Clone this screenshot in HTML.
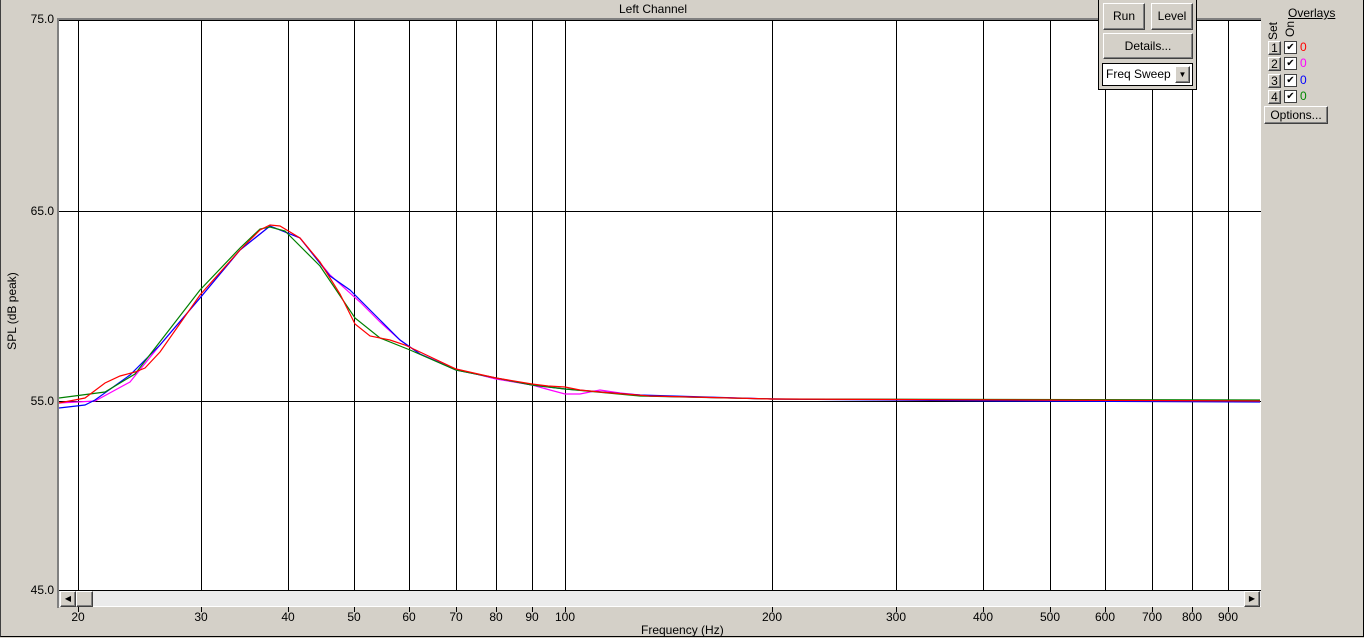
<!DOCTYPE html>
<html><head><meta charset="utf-8"><style>
body{margin:0;width:1364px;height:638px;background:#d4d0c8;font-family:"Liberation Sans",sans-serif;font-size:12px;overflow:hidden;position:relative}
.a{position:absolute}
.btn{position:absolute;background:#d4d0c8;border:1px solid;border-color:#fff #404040 #404040 #fff;box-shadow:inset -1px -1px 0 #808080;text-align:center;color:#000;box-sizing:border-box}
</style></head><body>
<div class="a" style="left:0;top:0;width:1362px;height:636px;border-right:1px solid #000;border-bottom:1px solid #000;border-left:1px solid #404040"></div>
<div class="a" style="left:600px;top:2px;width:106px;text-align:center">Left Channel</div>
<div class="a" style="left:641px;top:623px;">Frequency (Hz)</div>
<div class="a" style="left:-28px;top:304px;width:80px;text-align:center;transform:rotate(-90deg)">SPL (dB peak)</div>
<div class="a" style="left:20px;top:12px;width:34px;text-align:right">75.0</div>
<div class="a" style="left:20px;top:204px;width:34px;text-align:right">65.0</div>
<div class="a" style="left:20px;top:394px;width:34px;text-align:right">55.0</div>
<div class="a" style="left:20px;top:583px;width:34px;text-align:right">45.0</div>
<svg class="a" style="left:0;top:0" width="1364" height="638">
<rect x="57" y="18" width="1204" height="2" fill="#808080"/>
<rect x="57" y="18" width="2" height="590" fill="#808080"/>
<rect x="59" y="20" width="1202" height="571" fill="#fff"/>
<g stroke="#000" stroke-width="1">
<line x1="59" y1="20.5" x2="1261" y2="20.5"/><line x1="59" y1="211.5" x2="1261" y2="211.5"/><line x1="59" y1="401.5" x2="1261" y2="401.5"/><line x1="59" y1="590.5" x2="1261" y2="590.5"/>
<g id="v">
<line x1="78.5" y1="20" x2="78.5" y2="612"/><line x1="201.5" y1="20" x2="201.5" y2="612"/><line x1="288.5" y1="20" x2="288.5" y2="612"/><line x1="354.5" y1="20" x2="354.5" y2="612"/><line x1="409.5" y1="20" x2="409.5" y2="612"/><line x1="456.5" y1="20" x2="456.5" y2="612"/><line x1="496.5" y1="20" x2="496.5" y2="612"/><line x1="532.5" y1="20" x2="532.5" y2="612"/><line x1="565.5" y1="20" x2="565.5" y2="612"/><line x1="772.5" y1="20" x2="772.5" y2="612"/><line x1="896.5" y1="20" x2="896.5" y2="612"/><line x1="983.5" y1="20" x2="983.5" y2="612"/><line x1="1050.5" y1="20" x2="1050.5" y2="612"/><line x1="1105.5" y1="20" x2="1105.5" y2="612"/><line x1="1152.5" y1="20" x2="1152.5" y2="612"/><line x1="1192.5" y1="20" x2="1192.5" y2="612"/><line x1="1228.5" y1="20" x2="1228.5" y2="612"/>
</g></g>
<g fill="none" stroke-width="1.2">
<polyline stroke="#ff00ff" points="59,403 95,401 130,382 160,345 200,298 240,250 270,226 300,238 330,275 360,302 380,322 400,340 420,354 456,369 496,379 532,385 550,390 565,394 580,394 600,390 620,393 650,396 772,399 1260,401"/>
<polyline stroke="#0000ff" points="59,408 85,405 95,400 130,375 160,345 200,298 240,250 270,226 300,238 330,276 350,290 380,320 400,340 420,354 456,370 496,378 532,385 565,389 640,395 772,399 1000,401 1260,402"/>
<polyline stroke="#008000" points="59,398 105,392 135,374 200,290 240,248 260,229 270,227 285,231 320,266 355,318 380,338 410,350 456,370 496,378 532,385 565,389 640,396 772,399 1260,400"/>
<polyline stroke="#ff0000" points="59,403 85,398 105,383 120,376 135,372 145,368 160,352 200,295 240,250 260,230 270,225 280,226 300,238 320,262 340,294 355,324 370,336 390,340 405,345 420,352 456,369 496,378 532,384 548,386 565,387 580,390 600,392 650,396 772,399 1260,401"/>
</g>
<rect x="59" y="591" width="1202" height="16" fill="#ebebeb"/>
<rect x="59" y="606" width="1202" height="1" fill="#fff"/>
</svg>
<div class="btn" style="left:60px;top:591px;width:16px;height:16px;font-size:8px;line-height:14px">◀</div>
<div class="btn" style="left:76px;top:591px;width:17px;height:16px"></div>
<div class="btn" style="left:1244px;top:591px;width:16px;height:16px;font-size:8px;line-height:14px">▶</div>
<div class="a" style="left:52px;top:610px;width:52px;text-align:center">20</div>
<div class="a" style="left:175px;top:610px;width:52px;text-align:center">30</div>
<div class="a" style="left:262px;top:610px;width:52px;text-align:center">40</div>
<div class="a" style="left:328px;top:610px;width:52px;text-align:center">50</div>
<div class="a" style="left:383px;top:610px;width:52px;text-align:center">60</div>
<div class="a" style="left:430px;top:610px;width:52px;text-align:center">70</div>
<div class="a" style="left:470px;top:610px;width:52px;text-align:center">80</div>
<div class="a" style="left:506px;top:610px;width:52px;text-align:center">90</div>
<div class="a" style="left:539px;top:610px;width:52px;text-align:center">100</div>
<div class="a" style="left:746px;top:610px;width:52px;text-align:center">200</div>
<div class="a" style="left:870px;top:610px;width:52px;text-align:center">300</div>
<div class="a" style="left:957px;top:610px;width:52px;text-align:center">400</div>
<div class="a" style="left:1024px;top:610px;width:52px;text-align:center">500</div>
<div class="a" style="left:1079px;top:610px;width:52px;text-align:center">600</div>
<div class="a" style="left:1126px;top:610px;width:52px;text-align:center">700</div>
<div class="a" style="left:1166px;top:610px;width:52px;text-align:center">800</div>
<div class="a" style="left:1202px;top:610px;width:52px;text-align:center">900</div>
<div class="a" style="left:1098px;top:-1px;width:99px;height:91px;background:#d4d0c8;border:1px solid #000;box-sizing:border-box"></div>
<div class="btn" style="left:1103px;top:3px;width:42px;height:27px;line-height:25px">Run</div>
<div class="btn" style="left:1151px;top:3px;width:42px;height:27px;line-height:25px">Level</div>
<div class="btn" style="left:1103px;top:33px;width:90px;height:26px;line-height:24px">Details...</div>
<div class="a" style="left:1102px;top:63px;width:91px;height:23px;background:#fff;border:1px solid #000;box-sizing:border-box;line-height:20px;padding-left:3px">Freq Sweep</div>
<div class="btn" style="left:1175px;top:66px;width:15px;height:17px;font-size:8px;line-height:15px">▼</div>
<div class="a" style="left:1288px;top:6px;text-decoration:underline">Overlays</div>
<div class="a" style="left:1264px;top:24px;transform:rotate(-90deg)">Set</div>
<div class="a" style="left:1282px;top:22px;transform:rotate(-90deg)">On</div>
<div class="btn" style="left:1268px;top:41px;width:13px;height:14px;line-height:12px">1</div>
<div class="btn" style="left:1268px;top:57px;width:13px;height:14px;line-height:12px">2</div>
<div class="btn" style="left:1268px;top:74px;width:13px;height:14px;line-height:12px">3</div>
<div class="btn" style="left:1268px;top:90px;width:13px;height:14px;line-height:12px">4</div>
<div class="a" style="left:1284px;top:41px;width:13px;height:13px;background:#fff;border:1px solid #404040;box-sizing:border-box;font-size:10px;line-height:11px;text-align:center">✔</div>
<div class="a" style="left:1284px;top:57px;width:13px;height:13px;background:#fff;border:1px solid #404040;box-sizing:border-box;font-size:10px;line-height:11px;text-align:center">✔</div>
<div class="a" style="left:1284px;top:74px;width:13px;height:13px;background:#fff;border:1px solid #404040;box-sizing:border-box;font-size:10px;line-height:11px;text-align:center">✔</div>
<div class="a" style="left:1284px;top:90px;width:13px;height:13px;background:#fff;border:1px solid #404040;box-sizing:border-box;font-size:10px;line-height:11px;text-align:center">✔</div>
<div class="a" style="left:1300px;top:40px;color:#f00">0</div>
<div class="a" style="left:1300px;top:56px;color:#f0f">0</div>
<div class="a" style="left:1300px;top:73px;color:#00f">0</div>
<div class="a" style="left:1300px;top:89px;color:#080">0</div>
<div class="btn" style="left:1264px;top:106px;width:64px;height:18px;line-height:16px">Options...</div>
</body></html>
